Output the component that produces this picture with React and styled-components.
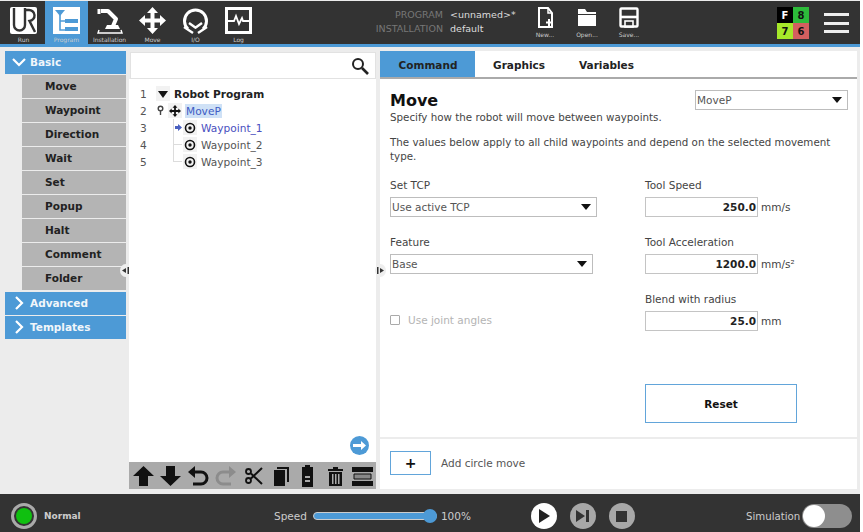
import React from 'react';
import styled, { createGlobalStyle } from 'styled-components';

const GlobalStyle = createGlobalStyle`
  html, body {
    margin: 0;
    padding: 0;
    background: #fff;
    overflow: hidden;
  }
  * {
    box-sizing: border-box;
  }
`;

const Screen = styled.div`
  width: 860px;
  height: 532px;
  padding-top: 1px;
  display: flex;
  flex-direction: column;
  font-family: 'DejaVu Sans', sans-serif;
  color: #333;
  background: #ececec;
`;

const Header = styled.header`
  height: 46px;
  flex: none;
  display: flex;
  background: #333;
  border-bottom: 3px solid #4d9ad6;
`;

const NavTab = styled.div`
  width: ${(p) => p.$width || 43}px;
  display: flex;
  flex-direction: column;
  align-items: center;
  padding-top: 6px;
  background: ${(p) => (p.$active ? '#4d9ad6' : 'transparent')};
  color: #ccc;
  font-size: 6px;
  line-height: 8px;

  svg {
    display: block;
    margin-bottom: 2px;
  }
`;

const NavGroup = styled.div`
  display: flex;
  padding-left: 2px;
`;

const ProgramInfo = styled.div`
  margin-left: 111px;
  padding-top: 7px;
  display: grid;
  grid-template-columns: 72px auto;
  column-gap: 7px;
  grid-auto-rows: 14px;
  width: 150px;
  font-size: 9.5px;
  line-height: 14px;
`;

const InfoLabel = styled.span`
  text-align: right;
  color: #777;
`;

const InfoValue = styled.span`
  color: #ddd;
  white-space: nowrap;
`;

const FileActions = styled.div`
  display: flex;
  margin-left: 3px;
`;

const FileAction = styled.div`
  width: 42px;
  display: flex;
  flex-direction: column;
  align-items: center;
  padding-top: 6px;
  color: #ccc;
  font-size: 6px;
  line-height: 8px;

  svg {
    margin-bottom: 3px;
  }
`;

const SafetyGrid = styled.div`
  margin: 6px 0 0 127px;
  width: 32px;
  height: 32px;
  display: grid;
  grid-template-columns: 16px 16px;
  grid-template-rows: 16px 16px;
`;

const SafetyCell = styled.div`
  display: flex;
  align-items: center;
  justify-content: center;
  background: ${(p) => p.$bg};
  color: ${(p) => p.$color || '#111'};
  font-size: 10px;
  font-weight: 700;
`;

const Hamburger = styled.div`
  margin: 12px 0 0 15px;
  width: 25px;
  height: 20px;
  display: flex;
  flex-direction: column;
  justify-content: space-between;

  span {
    display: block;
    height: 3px;
    background: #eee;
  }
`;

const Body = styled.main`
  flex: 1;
  min-height: 0;
  position: relative;
  display: flex;
  padding: 3px 3px 5px 5px;
`;

const Sidebar = styled.aside`
  width: 121px;
  flex: none;
  display: flex;
  flex-direction: column;
  gap: 1px;
`;

const GroupHeader = styled.div`
  height: 23px;
  flex: none;
  margin-top: ${(p) => p.$above || 0}px;
  display: flex;
  align-items: center;
  gap: 3px;
  padding-left: 6px;
  background: #4d9ad6;
  color: #f1f6fa;
  font-size: 10.5px;
  font-weight: 700;
`;

const SideItem = styled.div`
  height: 23px;
  flex: none;
  margin-left: 17px;
  padding-left: 23px;
  display: flex;
  align-items: center;
  background: #b4b4b4;
  color: #222;
  font-size: 10.5px;
  font-weight: 700;
`;

const TreePanel = styled.section`
  width: 247px;
  flex: none;
  margin-left: 3px;
  display: flex;
  flex-direction: column;
`;

const SearchBox = styled.div`
  height: 27px;
  flex: none;
  margin: 2px 0 0 1px;
  display: flex;
  align-items: center;
  justify-content: flex-end;
  padding-right: 6px;
  background: #fff;
  border: 1px solid #e2e2e2;
`;

const TreeArea = styled.div`
  flex: 1;
  min-height: 0;
  position: relative;
  background: #fff;
  padding-top: 6px;
`;

const TreeRow = styled.div`
  height: 17px;
  display: flex;
  align-items: center;
  font-size: 10.6px;
`;

const LineNumber = styled.span`
  width: 24px;
  padding-left: 11px;
  color: #555;
  flex: none;
`;

const RowBody = styled.div`
  height: 100%;
  display: flex;
  align-items: center;
  padding-left: ${(p) => p.$indent}px;
`;

const RowMarker = styled.span`
  width: ${(p) => p.$width}px;
  height: 100%;
  flex: none;
  position: relative;
  display: flex;
  align-items: center;
  justify-content: center;
`;

const BranchLine = styled.span`
  position: absolute;
  left: 0;
  top: 0;
  bottom: ${(p) => (p.$last ? '50%' : '0')};
  width: 1px;
  background: #dcdcdc;

  &::after {
    content: '';
    display: ${(p) => (p.$branch ? 'block' : 'none')};
    position: absolute;
    left: 0;
    top: 8px;
    width: 9px;
    height: 1px;
    background: #dcdcdc;
  }
`;

const NodeIcon = styled.span`
  width: 14px;
  height: 15px;
  flex: none;
  display: flex;
  align-items: center;
  justify-content: center;
  background: #f2f2f2;
`;

const RowLabel = styled.span`
  margin-left: 3px;
  padding: 1px 1px;
  white-space: nowrap;
  color: ${(p) => p.$color || '#555'};
  font-weight: ${(p) => (p.$bold ? 700 : 400)};
  background: ${(p) => (p.$selected ? '#cfe1f6' : 'transparent')};
`;

const GoButton = styled.div`
  position: absolute;
  right: 7px;
  bottom: 7px;
  width: 19px;
  height: 19px;
  border-radius: 50%;
  background: #4d9ad6;
  display: flex;
  align-items: center;
  justify-content: center;
`;

const TreeToolbar = styled.div`
  height: 27px;
  flex: none;
  display: flex;
  align-items: center;
  justify-content: space-between;
  padding: 0 2px 0 3px;
  background: #aaa;
`;

const EditorPanel = styled.section`
  flex: 1;
  min-width: 0;
  margin: 1px 0 0 4px;
  display: flex;
  flex-direction: column;
`;

const Tabs = styled.div`
  height: 28px;
  flex: none;
  display: flex;
  background: #fff;
  border-bottom: 2px solid #aaa;
`;

const Tab = styled.div`
  width: ${(p) => p.$width}px;
  display: flex;
  align-items: center;
  justify-content: center;
  padding: 1px 0 0 1px;
  background: ${(p) => (p.$active ? '#4d9ad6' : 'transparent')};
  color: #222;
  font-size: 10.5px;
  font-weight: 700;
`;

const Editor = styled.div`
  flex: 1;
  min-height: 0;
  display: flex;
  flex-direction: column;
  padding: 11px 9px 0 10px;
  background: #fff;
`;

const TitleRow = styled.div`
  display: flex;
  justify-content: space-between;
  align-items: flex-start;
  height: 20px;
`;

const Title = styled.h1`
  margin: 1px 0 0;
  font-size: 16px;
  line-height: 20px;
  font-weight: 700;
  color: #111;
`;

const Text = styled.p`
  margin: 0 0 ${(p) => p.$after || 0}px;
  font-size: 10.3px;
  line-height: 14px;
  color: #444;
`;

const FormGrid = styled.div`
  margin-top: 15px;
  display: grid;
  grid-template-columns: 255px 1fr;
  grid-auto-rows: 57px;
`;

const Field = styled.div`
  display: flex;
  flex-direction: column;
  justify-content: ${(p) => (p.$end ? 'flex-end' : 'flex-start')};
  padding-bottom: ${(p) => (p.$end ? 23 : 0)}px;
`;

const FieldLabel = styled.label`
  height: 19px;
  font-size: 10.5px;
  line-height: 14px;
  color: #444;
`;

const SelectBox = styled.div`
  width: ${(p) => p.$width}px;
  height: 20px;
  display: flex;
  align-items: center;
  justify-content: space-between;
  padding: 0 5px 0 1px;
  background: #fff;
  border: 1px solid #bdbdbd;
  font-size: 10.5px;
  color: #555;
`;

const Caret = styled.span`
  width: 0;
  height: 0;
  border-left: 5px solid transparent;
  border-right: 5px solid transparent;
  border-top: 6px solid #111;
`;

const InputRow = styled.div`
  display: flex;
  align-items: center;
  gap: 3px;
  font-size: 10.5px;
  color: #444;
`;

const NumberBox = styled.div`
  width: 113px;
  height: 20px;
  padding-right: 1px;
  text-align: right;
  line-height: 18px;
  background: #fff;
  border: 1px solid #c4c4c4;
  font-size: 10.5px;
  font-weight: 700;
  color: #222;
`;

const CheckRow = styled.div`
  display: flex;
  align-items: center;
  gap: 8px;
  font-size: 10.5px;
  color: #b4b4b4;
`;

const CheckBox = styled.span`
  width: 10px;
  height: 10px;
  border: 1px solid #aaa;
  border-radius: 1px;
`;

const ResetRow = styled.div`
  margin-top: 35px;
  padding-left: 255px;
`;

const OutlineButton = styled.button`
  width: ${(p) => p.$width}px;
  height: ${(p) => p.$height}px;
  padding: 0;
  background: #fff;
  border: 1px solid #62a5da;
  color: #111;
  font-family: inherit;
  font-size: ${(p) => p.$size}px;
  font-weight: 700;
`;

const AddBar = styled.div`
  height: 50px;
  flex: none;
  margin-top: 2px;
  display: flex;
  align-items: center;
  gap: 10px;
  padding: 0 0 2px 10px;
  background: #fff;
  font-size: 10.5px;
  color: #555;
`;

const AddLabel = styled.span`
  margin-bottom: 1px;
`;

const Handle = styled.div`
  position: absolute;
  top: 217px;
  left: ${(p) => p.$left}px;
  width: 11px;
  height: 13px;
  border-radius: 50%;
  background: #eee;
  display: flex;
  align-items: center;
  justify-content: center;
`;

const Footer = styled.footer`
  height: 38px;
  flex: none;
  display: flex;
  align-items: center;
  padding-top: 6px;
  background: #333;
  color: #ccc;
  font-size: 10.5px;
`;

const StatusLamp = styled.div`
  width: 26px;
  height: 26px;
  margin-left: 11px;
  border-radius: 50%;
  background: #333;
  border: 3px solid #aaa;
  display: flex;
  align-items: center;
  justify-content: center;

  &::after {
    content: '';
    width: 16px;
    height: 16px;
    border-radius: 50%;
    background: #10c010;
  }
`;

const StatusText = styled.span`
  margin-left: 7px;
  width: 230px;
  font-size: 9px;
  font-weight: 700;
`;

const SpeedTrack = styled.div`
  width: 124px;
  height: 8px;
  margin: 0 4px 0 6px;
  position: relative;
  border-radius: 4px;
  background: #4d9ad6;
  border: 1px solid #ccc;

  &::after {
    content: '';
    position: absolute;
    right: -1px;
    top: -4px;
    width: 14px;
    height: 14px;
    border-radius: 50%;
    background: #4d9ad6;
  }
`;

const Transport = styled.div`
  margin-left: 60px;
  display: flex;
  gap: 13px;
`;

const RoundButton = styled.div`
  width: 26px;
  height: 26px;
  border-radius: 50%;
  background: ${(p) => (p.$on ? '#fff' : '#a8a8a8')};
  display: flex;
  align-items: center;
  justify-content: center;
`;

const SimLabel = styled.span`
  margin-left: 111px;
  font-size: 10.2px;
`;

const Toggle = styled.div`
  width: 50px;
  height: 24px;
  margin-left: 2px;
  display: flex;
  align-items: center;
  padding-left: 1px;
  border-radius: 12px;
  background: #8e8e8e;

  &::after {
    content: '';
    width: 22px;
    height: 22px;
    border-radius: 50%;
    background: #fff;
  }
`;

const UrIcon = () => (
  <svg width="27" height="27" viewBox="0 0 27 27">
    <rect width="27" height="27" rx="2" fill="#fff" />
    <path d="M4 1v17a5.5 5.5 0 0 0 11 0V1" fill="none" stroke="#333" strokeWidth="2.4" />
    <path d="M15 3h3.5a5.5 5.5 0 0 1 1 11L25 25" fill="none" stroke="#333" strokeWidth="2.4" />
  </svg>
);

const ProgramIcon = () => (
  <svg width="27" height="27" viewBox="0 0 27 27">
    <rect width="27" height="27" fill="#fff" />
    <path d="M2 3h10l-5 6z" fill="#4d9ad6" />
    <path d="M7 8v15h6M7 14h6" stroke="#4d9ad6" strokeWidth="1.6" fill="none" />
    <rect x="12" y="12" width="13" height="4" fill="#4d9ad6" />
    <rect x="12" y="20" width="13" height="4" fill="#4d9ad6" />
  </svg>
);

const InstallIcon = () => (
  <svg width="27" height="27" viewBox="0 0 27 27" fill="none" stroke="#fff">
    <path d="M5 4h7l8 8-3 7" strokeWidth="4" strokeLinejoin="round" />
    <path d="M3 2v5" strokeWidth="3" />
    <path d="M9 22l2-4h11l2 4z" fill="#fff" stroke="none" />
    <path d="M3 23l-1 3h24l-1-3" strokeWidth="1.4" />
  </svg>
);

const MoveIcon = ({ size = 27, color = '#fff' }) => (
  <svg width={size} height={size} viewBox="0 0 27 27" fill={color}>
    <path d="M13.5 0l5.5 6h-3.5v5.5H21V8l6 5.5-6 5.5v-3.5h-5.5V21H19l-5.5 6L8 21h3.5v-5.5H6V19l-6-5.5L6 8v3.5h5.5V6H8z" />
  </svg>
);

const IoIcon = () => (
  <svg width="27" height="27" viewBox="0 0 27 27" fill="none" stroke="#fff" strokeWidth="3">
    <path d="M6 22a11 11 0 1 1 15 0" />
    <path d="M2 20l9 6M25 20l-9 6M7 16l7 5M20 16l-7 5" strokeWidth="2.4" />
  </svg>
);

const LogIcon = () => (
  <svg width="27" height="27" viewBox="0 0 27 27" fill="none" stroke="#fff">
    <rect x="1.5" y="1.5" width="24" height="24" strokeWidth="3" />
    <path d="M3 14h6l2-5 3 8 3-6 1 3h6" strokeWidth="1.8" />
  </svg>
);

const NewIcon = () => (
  <svg width="19" height="21" viewBox="0 0 19 21" fill="none">
    <path d="M3 1h9l4 5v14H3z" stroke="#fff" strokeWidth="2" />
    <path d="M12 1v5h4" stroke="#fff" strokeWidth="1.5" />
    <path d="M13 12v7M10 15.5h7" stroke="#fff" strokeWidth="2" />
  </svg>
);

const OpenIcon = () => (
  <svg width="20" height="21" viewBox="0 0 20 21" fill="#fff">
    <path d="M1 2h7l2 3h9v2H1z" />
    <path d="M1 8h18v11H1z" />
  </svg>
);

const SaveIcon = () => (
  <svg width="20" height="21" viewBox="0 0 20 21" fill="none" stroke="#fff">
    <rect x="1.5" y="1.5" width="17" height="18" rx="1" strokeWidth="2.4" />
    <path d="M1 10h18" strokeWidth="2.6" />
    <rect x="6" y="14" width="8" height="6" strokeWidth="1.6" />
  </svg>
);

const Chevron = ({ open }) => (
  <svg width="16" height="14" viewBox="0 0 16 14" fill="none" stroke="#fff" strokeWidth="2.2">
    {open ? <path d="M2 4l6 6 6-6" /> : <path d="M5 1l6 6-6 6" />}
  </svg>
);

const SearchIcon = () => (
  <svg width="18" height="18" viewBox="0 0 18 18" fill="none" stroke="#222" strokeWidth="2">
    <circle cx="7" cy="7" r="5" />
    <path d="M11 11l6 6" strokeWidth="2.6" />
  </svg>
);

const TargetIcon = () => (
  <svg width="12" height="12" viewBox="0 0 12 12">
    <circle cx="6" cy="6" r="4.5" fill="none" stroke="#111" strokeWidth="1.6" />
    <circle cx="6" cy="6" r="1.7" fill="#111" />
  </svg>
);

const ExpandBox = () => (
  <NodeIcon>
    <svg width="10" height="10" viewBox="0 0 10 10">
      <path d="M0 2h10L5 9z" fill="#111" />
    </svg>
  </NodeIcon>
);

const PinIcon = () => (
  <svg width="7" height="11" viewBox="0 0 7 11">
    <circle cx="3.5" cy="3.5" r="2.3" fill="none" stroke="#444" strokeWidth="1.4" />
    <path d="M3.5 6v4" stroke="#444" strokeWidth="1.4" />
  </svg>
);

const CurrentIcon = () => (
  <svg width="7" height="7" viewBox="0 0 7 7">
    <path d="M0 2h3V0l4 3.5L3 7V5H0z" fill="#4a60c0" />
  </svg>
);

const HandleGlyph = ({ flip }) => (
  <svg width="7" height="7" viewBox="0 0 7 7" fill="#333">
    {flip ? <path d="M0 0h1.5v7H0zM3 1l4 2.5L3 6z" /> : <path d="M5.5 0H7v7H5.5zM4 1L0 3.5 4 6z" />}
  </svg>
);

const ToolIcon = ({ children, color = '#111' }) => (
  <svg width="23" height="22" viewBox="0 0 23 22" fill={color}>
    {children}
  </svg>
);

const toolbarIcons = [
  { key: 'up', body: <path d="M11.5 1L22 11h-6v10H7V11H1z" /> },
  { key: 'down', body: <path d="M7 1h9v10h6L11.5 21 1 11h6z" /> },
  {
    key: 'undo',
    body: (
      <>
        <path d="M8 1v12L1 7z" />
        <path d="M7 7h7a5 5 0 0 1 0 12H6" fill="none" stroke="#111" strokeWidth="3" />
      </>
    ),
  },
  {
    key: 'redo',
    color: '#8c8c8c',
    body: (
      <>
        <path d="M15 1v12l7-6z" />
        <path d="M16 7H9a5 5 0 0 0 0 12h8" fill="none" stroke="#8c8c8c" strokeWidth="3" />
      </>
    ),
  },
  {
    key: 'cut',
    body: (
      <>
        <path d="M9 8.5L20 19M9 13.5L20 3" stroke="#111" strokeWidth="2" />
        <circle cx="6.5" cy="6.5" r="2.5" fill="none" stroke="#111" strokeWidth="1.8" />
        <circle cx="6.5" cy="15.5" r="2.5" fill="none" stroke="#111" strokeWidth="1.8" />
      </>
    ),
  },
  {
    key: 'copy',
    body: (
      <>
        <path d="M8 2h12v15h-2V4H8z" />
        <path d="M5 5h11v16H5z" />
      </>
    ),
  },
  {
    key: 'paste',
    body: (
      <>
        <path d="M9 0h5v2h3v20H6V2h3z" />
        <path d="M9 11h5v2H9zM9 15h5v2H9z" fill="#aaa" />
      </>
    ),
  },
  {
    key: 'delete',
    body: (
      <>
        <path d="M4 4h15v2H4zM9 2h5v2H9z" />
        <path d="M5 7h13v14H5z" />
        <path d="M8 9h1.5v10H8zM11 9h1.5v10H11zM14 9h1.5v10H14z" fill="#aaa" />
      </>
    ),
  },
  {
    key: 'suppress',
    body: (
      <>
        <path d="M1 2h21v5H1zM1 16h21v5H1z" />
        <path d="M3 9h17v5H3z" fill="#888" stroke="#111" strokeWidth="1" />
      </>
    ),
  },
];

const basicItems = ['Move', 'Waypoint', 'Direction', 'Wait', 'Set', 'Popup', 'Halt', 'Comment', 'Folder'];

const waypoints = [
  { line: 3, name: 'Waypoint_1', color: '#4a4fc0', current: true },
  { line: 4, name: 'Waypoint_2', branch: true },
  { line: 5, name: 'Waypoint_3', branch: true, last: true },
];

const navTabs = [
  { label: 'Run', icon: <UrIcon /> },
  { label: 'Program', icon: <ProgramIcon />, active: true },
  { label: 'Installation', icon: <InstallIcon /> },
  { label: 'Move', icon: <MoveIcon /> },
  { label: 'I/O', icon: <IoIcon /> },
  { label: 'Log', icon: <LogIcon /> },
];

export default function App() {
  return (
    <Screen>
      <GlobalStyle />
      <Header>
        <NavGroup>
          {navTabs.map((tab) => (
            <NavTab key={tab.label} $active={tab.active}>
              {tab.icon}
              {tab.label}
            </NavTab>
          ))}
        </NavGroup>
        <ProgramInfo>
          <InfoLabel>PROGRAM</InfoLabel>
          <InfoValue>&lt;unnamed&gt;*</InfoValue>
          <InfoLabel>INSTALLATION</InfoLabel>
          <InfoValue>default</InfoValue>
        </ProgramInfo>
        <FileActions>
          <FileAction>
            <NewIcon />
            New...
          </FileAction>
          <FileAction>
            <OpenIcon />
            Open...
          </FileAction>
          <FileAction>
            <SaveIcon />
            Save...
          </FileAction>
        </FileActions>
        <SafetyGrid>
          <SafetyCell $bg="#000" $color="#fff">F</SafetyCell>
          <SafetyCell $bg="#2dbb3a">8</SafetyCell>
          <SafetyCell $bg="#a6e82a">7</SafetyCell>
          <SafetyCell $bg="#d35f5f">6</SafetyCell>
        </SafetyGrid>
        <Hamburger>
          <span />
          <span />
          <span />
        </Hamburger>
      </Header>

      <Body>
        <Sidebar>
          <GroupHeader $above={0.5}>
            <Chevron open />
            Basic
          </GroupHeader>
          {basicItems.map((item) => (
            <SideItem key={item}>{item}</SideItem>
          ))}
          <GroupHeader $above={1}>
            <Chevron />
            Advanced
          </GroupHeader>
          <GroupHeader>
            <Chevron />
            Templates
          </GroupHeader>
        </Sidebar>
        <Handle $left={120}>
          <HandleGlyph />
        </Handle>
        <TreePanel>
          <SearchBox>
            <SearchIcon />
          </SearchBox>
          <TreeArea>
            <TreeRow>
              <LineNumber>1</LineNumber>
              <RowBody $indent={3}>
                <ExpandBox />
                <RowLabel $bold $color="#222">Robot Program</RowLabel>
              </RowBody>
            </TreeRow>
            <TreeRow>
              <LineNumber>2</LineNumber>
              <RowBody $indent={0}>
                <RowMarker $width={15}>
                  <PinIcon />
                </RowMarker>
                <NodeIcon>
                  <MoveIcon size={12} color="#111" />
                </NodeIcon>
                <RowLabel $selected $color="#3e5bc4">MoveP</RowLabel>
              </RowBody>
            </TreeRow>
            {waypoints.map((point) => (
              <TreeRow key={point.line}>
                <LineNumber>{point.line}</LineNumber>
                <RowBody $indent={20}>
                  <RowMarker $width={10}>
                    <BranchLine $branch={point.branch} $last={point.last} />
                    {point.current && <CurrentIcon />}
                  </RowMarker>
                  <NodeIcon>
                    <TargetIcon />
                  </NodeIcon>
                  <RowLabel $color={point.color}>{point.name}</RowLabel>
                </RowBody>
              </TreeRow>
            ))}
            <GoButton>
              <svg width="15" height="11" viewBox="0 0 15 11" fill="#fff">
                <path d="M1 4h8V1l5 4.5L9 10V7H1z" />
              </svg>
            </GoButton>
          </TreeArea>
          <TreeToolbar>
            {toolbarIcons.map((icon) => (
              <ToolIcon key={icon.key} color={icon.color}>
                {icon.body}
              </ToolIcon>
            ))}
          </TreeToolbar>
        </TreePanel>
        <Handle $left={375}>
          <HandleGlyph flip />
        </Handle>

        <EditorPanel>
          <Tabs>
            <Tab $width={95} $active>Command</Tab>
            <Tab $width={87}>Graphics</Tab>
            <Tab $width={88}>Variables</Tab>
          </Tabs>
          <Editor>
            <TitleRow>
              <Title>Move</Title>
              <SelectBox $width={153}>
                MoveP
                <Caret />
              </SelectBox>
            </TitleRow>
            <Text $after={11}>Specify how the robot will move between waypoints.</Text>
            <Text>
              The values below apply to all child waypoints and depend on the selected movement type.
            </Text>
            <FormGrid>
              <Field>
                <FieldLabel>Set TCP</FieldLabel>
                <SelectBox $width={207}>
                  Use active TCP
                  <Caret />
                </SelectBox>
              </Field>
              <Field>
                <FieldLabel>Tool Speed</FieldLabel>
                <InputRow>
                  <NumberBox>250.0</NumberBox>
                  mm/s
                </InputRow>
              </Field>
              <Field>
                <FieldLabel>Feature</FieldLabel>
                <SelectBox $width={203}>
                  Base
                  <Caret />
                </SelectBox>
              </Field>
              <Field>
                <FieldLabel>Tool Acceleration</FieldLabel>
                <InputRow>
                  <NumberBox>1200.0</NumberBox>
                  mm/s²
                </InputRow>
              </Field>
              <Field $end>
                <CheckRow>
                  <CheckBox />
                  Use joint angles
                </CheckRow>
              </Field>
              <Field>
                <FieldLabel>Blend with radius</FieldLabel>
                <InputRow>
                  <NumberBox>25.0</NumberBox>
                  mm
                </InputRow>
              </Field>
            </FormGrid>
            <ResetRow>
              <OutlineButton $width={152} $height={39} $size={10.5}>Reset</OutlineButton>
            </ResetRow>
          </Editor>
          <AddBar>
            <OutlineButton $width={41} $height={24} $size={14}>+</OutlineButton>
            <AddLabel>Add circle move</AddLabel>
          </AddBar>
        </EditorPanel>
      </Body>

      <Footer>
        <StatusLamp />
        <StatusText>Normal</StatusText>
        Speed
        <SpeedTrack />
        100%
        <Transport>
          <RoundButton $on>
            <svg width="12" height="14" viewBox="0 0 12 14" fill="#222">
              <path d="M1 0l11 7-11 7z" />
            </svg>
          </RoundButton>
          <RoundButton>
            <svg width="14" height="12" viewBox="0 0 14 12" fill="#333">
              <path d="M0 0l9 6-9 6zM10 0h3v12h-3z" />
            </svg>
          </RoundButton>
          <RoundButton>
            <svg width="11" height="11" viewBox="0 0 11 11" fill="#333">
              <rect width="11" height="11" />
            </svg>
          </RoundButton>
        </Transport>
        <SimLabel>Simulation</SimLabel>
        <Toggle />
      </Footer>
    </Screen>
  );
}
